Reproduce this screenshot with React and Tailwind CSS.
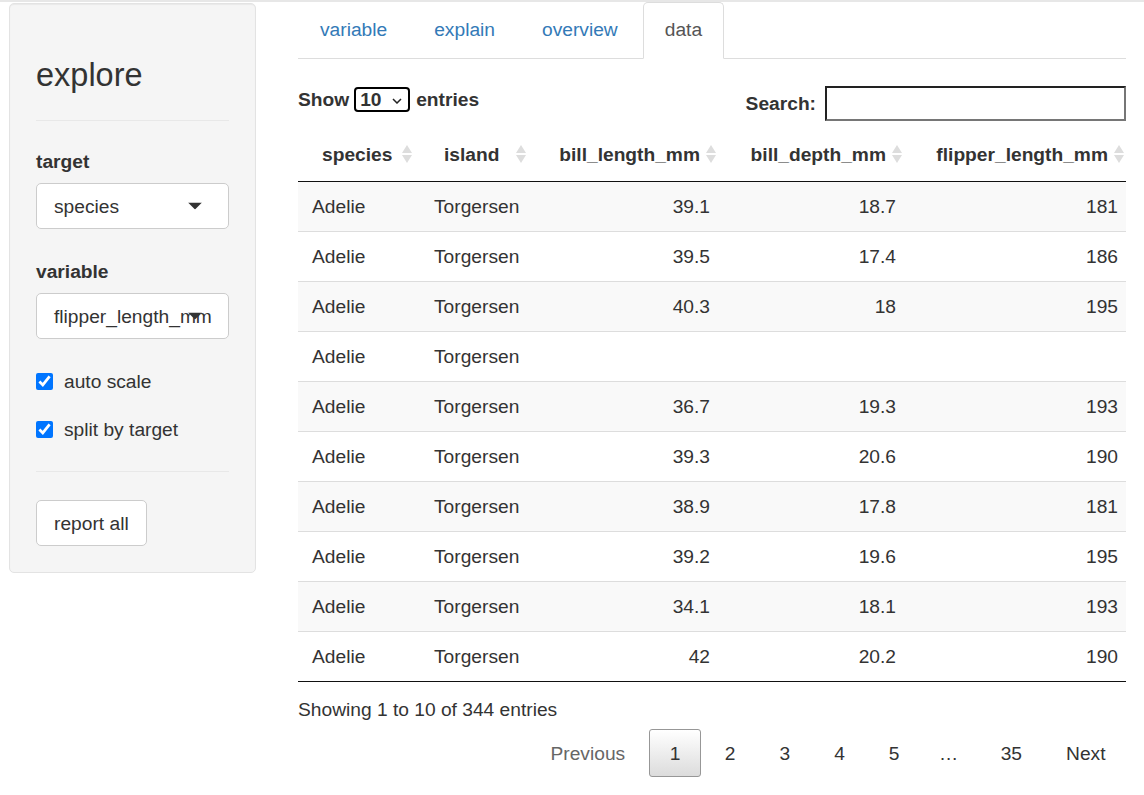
import { useState } from 'react';

const ROWS = [
  ['Adelie', 'Torgersen', '39.1', '18.7', '181'],
  ['Adelie', 'Torgersen', '39.5', '17.4', '186'],
  ['Adelie', 'Torgersen', '40.3', '18', '195'],
  ['Adelie', 'Torgersen', '', '', ''],
  ['Adelie', 'Torgersen', '36.7', '19.3', '193'],
  ['Adelie', 'Torgersen', '39.3', '20.6', '190'],
  ['Adelie', 'Torgersen', '38.9', '17.8', '181'],
  ['Adelie', 'Torgersen', '39.2', '19.6', '195'],
  ['Adelie', 'Torgersen', '34.1', '18.1', '193'],
  ['Adelie', 'Torgersen', '42', '20.2', '190'],
];

const TABS = ['variable', 'explain', 'overview', 'data'];

const SortIcon = () => (
  <svg width="12" height="20" viewBox="0 0 12 20" className="absolute right-[7px] top-1/2 -translate-y-1/2">
    <polygon points="1,9 6,1 11,9" fill="#dddddd" />
    <polygon points="1,11 6,19 11,11" fill="#dddddd" />
  </svg>
);

const Caret = () => (
  <svg width="14" height="7" viewBox="0 0 14 7" className="absolute right-[26px] top-1/2 -translate-y-1/2">
    <polygon points="0,0 14,0 7,7" fill="#333" />
  </svg>
);

const FakeSelect = ({ value }) => (
  <div className="relative h-[46px] bg-white border border-[#cccccc] rounded-[5px] overflow-hidden flex items-center pl-[17px] whitespace-nowrap">
    {value}
    <Caret />
  </div>
);

const Check = ({ label }) => (
  <label className="flex items-center h-[27px]">
    <input type="checkbox" defaultChecked className="w-[17px] h-[17px] m-0 accent-[#0075ff]" />
    <span className="ml-[11px]">{label}</span>
  </label>
);

const Sidebar = () => (
  <div className="w-[247px] mt-px bg-[#f5f5f5] border border-[#e3e3e3] rounded-[5px] px-[26px] pt-[26px] pb-[26px] shadow-[inset_0_1px_1px_rgba(0,0,0,0.05)]">
    <h3 className="mt-[27px] text-[32.5px] leading-[36px]">explore</h3>
    <hr className="mt-[27px] mb-[27px] border-0 border-t border-[#e8e8e8]" />
    <div className="font-bold mb-[8px]">target</div>
    <FakeSelect value="species" />
    <div className="font-bold mt-[29px] mb-[8px]">variable</div>
    <FakeSelect value="flipper_length_mm" />
    <div className="mt-[29px] flex flex-col gap-[21px]">
      <Check label="auto scale" />
      <Check label="split by target" />
    </div>
    <hr className="mt-[28px] mb-[28px] border-0 border-t border-[#e8e8e8]" />
    <button className="h-[46px] px-[17px] bg-white border border-[#cccccc] rounded-[5px] leading-[27px]">report all</button>
  </div>
);

const HEAD = [
  { label: 'species', num: false },
  { label: 'island', num: false },
  { label: 'bill_length_mm', num: true },
  { label: 'bill_depth_mm', num: true },
  { label: 'flipper_length_mm', num: true },
];

const DataTable = () => (
  <div className="w-[828px] overflow-hidden">
    <div className="w-[834px]">
      <div className="grid grid-cols-[122px_114px_190px_186px_222px] h-[55px] border-b border-[#111111] font-bold">
        {HEAD.map((h) => (
          <div key={h.label} className={`relative flex items-center ${h.num ? 'justify-end pr-[24px]' : 'pl-[24px]'}`}>
            {h.label}
            <SortIcon />
          </div>
        ))}
      </div>
      {ROWS.map((r, i) => (
        <div
          key={i}
          className={`grid grid-cols-[122px_114px_190px_186px_222px] h-[50px] border-b ${i === ROWS.length - 1 ? 'border-[#111111]' : 'border-[#dddddd]'} ${i % 2 === 0 ? 'bg-[#f9f9f9]' : 'bg-white'}`}
        >
          <div className="flex items-center pl-[14px]">{r[0]}</div>
          <div className="flex items-center pl-[14px]">{r[1]}</div>
          <div className="flex items-center justify-end pr-[14px]">{r[2]}</div>
          <div className="flex items-center justify-end pr-[14px]">{r[3]}</div>
          <div className="flex items-center justify-end pr-[14px]">{r[4]}</div>
        </div>
      ))}
    </div>
  </div>
);

const Pager = () => {
  const items = ['1', '2', '3', '4', '5', '…', '35'];
  return (
    <div className="flex justify-end mt-[6px]">
      <span className="h-[48px] flex items-center px-[19.5px] ml-[3px] text-[#666666] border border-transparent">Previous</span>
      {items.map((p) =>
        p === '1' ? (
          <span key={p} className="h-[48px] flex items-center px-[20px] ml-[3px] border border-[#979797] rounded-[3px] bg-gradient-to-b from-white to-[#dcdcdc]">
            {p}
          </span>
        ) : p === '…' ? (
          <span key={p} className="h-[48px] flex items-center pl-[16px] pr-[19px] ml-[3px]">{p}</span>
        ) : (
          <span key={p} className="h-[48px] flex items-center px-[19.5px] ml-[3px] border border-transparent">{p}</span>
        )
      )}
      <span className="h-[48px] flex items-center px-[19.5px] ml-[3px] border border-transparent">Next</span>
    </div>
  );
};

export default function App() {
  const [tab] = useState('data');
  return (
    <div className="min-h-screen bg-white text-[#333333] text-[19.2px] leading-[27px] font-['Liberation_Sans',Arial,sans-serif]">
      <div className="h-[2px] bg-[#e7e7e7]" />
      <div className="flex pl-[9px]">
        <div>
          <Sidebar />
        </div>
        <div className="ml-[42px] w-[828px]">
          {/* Tabs */}
          <ul className="flex border-b border-[#dddddd]">
            {TABS.map((t) => (
              <li key={t} className="-mb-px mr-[3px]">
                <span
                  className={`block px-[21px] pt-[13px] pb-[15px] border rounded-t-[5px] ${
                    t === tab ? 'border-[#dddddd] border-b-white bg-white text-[#555555]' : 'border-transparent text-[#337ab7]'
                  }`}
                >
                  {t}
                </span>
              </li>
            ))}
          </ul>

          {/* Controls */}
          <div className="flex justify-between items-start pt-[27px] mb-[6px]">
            <div className="flex items-center h-[27px] font-bold">
              <span>Show</span>
              <span className="relative ml-[5px] mr-[6px] w-[56px] h-[25px] border-2 border-black rounded-[4px] flex items-center pl-[4px]">
                10
                <svg width="10" height="6" viewBox="0 0 10 6" className="absolute right-[6px] top-[9px]">
                  <polyline points="1,1 5,5 9,1" fill="none" stroke="#222" strokeWidth="1.5" />
                </svg>
              </span>
              <span>entries</span>
            </div>
            <div className="flex items-center h-[35px] font-bold">
              <span className="mr-[9px]">Search:</span>
              <input
                type="text"
                className="w-[301px] h-[35px] border-2 border-t-[#222222] border-l-[#222222] border-r-[#767676] border-b-[#767676] outline-none"
              />
            </div>
          </div>

          <DataTable />

          <div className="mt-[14px]">Showing 1 to 10 of 344 entries</div>
          <Pager />
        </div>
      </div>
    </div>
  );
}
